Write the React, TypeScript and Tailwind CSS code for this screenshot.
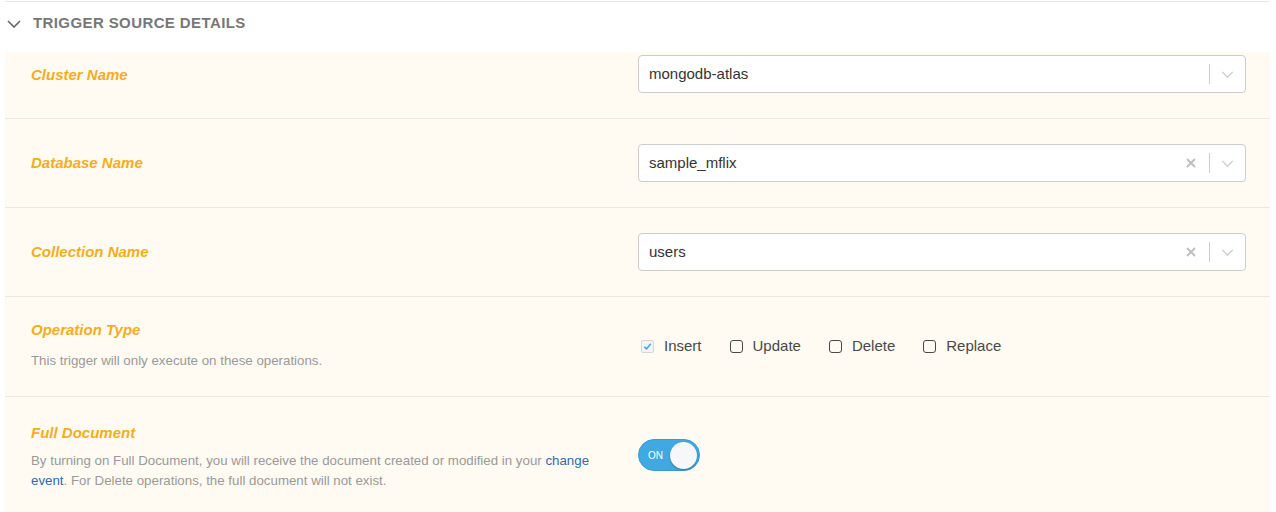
import React from 'react';

const font = { fontFamily: '"Liberation Sans", Arial, sans-serif' };

function Chevron({ className }: { className?: string }) {
  return (
    <svg viewBox="0 0 14 8" className={className} fill="none" stroke="currentColor" strokeWidth="1.6">
      <path d="M1 1l6 6 6-6" />
    </svg>
  );
}

function Select({ value, clearable }: { value: string; clearable?: boolean }) {
  return (
    <div className="flex h-[38px] w-[608px] items-center rounded-[4px] border border-[#cccccc] bg-white pl-[10px]">
      <span className="flex-1 text-[15px] text-[#333333]">{value}</span>
      {clearable && (
        <svg viewBox="0 0 10 10" className="mr-[13px] h-[10px] w-[10px] text-[#bdbdbd]" stroke="currentColor" strokeWidth="1.8">
          <path d="M1 1l8 8M9 1l-8 8" />
        </svg>
      )}
      <div className="h-[20px] w-px bg-[#cccccc]" />
      <Chevron className="mx-[11px] h-[7px] w-[13px] text-[#cccccc]" />
    </div>
  );
}

function Label({ children }: { children: React.ReactNode }) {
  return <div className="text-[15px] font-bold italic text-[#f5ad1b]">{children}</div>;
}

function Check({ label, checked }: { label: string; checked?: boolean }) {
  return (
    <label className="flex items-center gap-[10px] text-[15px] text-[#4a4848]">
      {checked ? (
        <span className="flex h-[13px] w-[13px] items-center justify-center rounded-[2px] border border-[#d6d6d6] bg-[#f4f4f4]">
          <svg viewBox="0 0 10 10" className="h-[9px] w-[9px]" fill="none" stroke="#3aa1dd" strokeWidth="1.6">
            <path d="M1.5 5.2l2.4 2.4L8.6 2" />
          </svg>
        </span>
      ) : (
        <span className="h-[13px] w-[13px] rounded-[3px] border-[1.5px] border-[#4a4848]" />
      )}
      {label}
    </label>
  );
}

function Row({ left, right, className }: { left: React.ReactNode; right: React.ReactNode; className: string }) {
  return (
    <div className={`grid grid-cols-[633px_608px] border-b border-[#ece8e1] ${className}`}>
      <div className="pl-[26px]">{left}</div>
      <div>{right}</div>
    </div>
  );
}

export default function App() {
  return (
    <div className="h-[512px] bg-white pl-[5px] pr-[6px] pt-[1px]" style={font}>
      <div className="border-t border-[#e8e8e8]">
        <div className="flex h-[50px] items-center gap-[12px] pb-[7px] pl-[2px]">
          <Chevron className="h-[8px] w-[14px] text-[#666666]" />
          <span className="text-[15px] font-bold tracking-[0.4px] text-[#777777]">TRIGGER SOURCE DETAILS</span>
        </div>
        <div className="bg-[#fffbf3]">
          <Row
            className="h-[67px] items-start pt-[3px]"
            left={<div className="pt-[9px]"><Label>Cluster Name</Label></div>}
            right={<Select value="mongodb-atlas" />}
          />
          <Row
            className="h-[89px] items-center"
            left={<Label>Database Name</Label>}
            right={<Select value="sample_mflix" clearable />}
          />
          <Row
            className="h-[89px] items-center"
            left={<Label>Collection Name</Label>}
            right={<Select value="users" clearable />}
          />
          <Row
            className="h-[100px] items-center"
            left={
              <div className="-mt-[3px]">
                <Label>Operation Type</Label>
                <div className="mt-[10px] text-[13.3px] text-[#999999]">This trigger will only execute on these operations.</div>
              </div>
            }
            right={
              <div className="flex items-center gap-[28px] pl-[3px]">
                <Check label="Insert" checked />
                <Check label="Update" />
                <Check label="Delete" />
                <Check label="Replace" />
              </div>
            }
          />
          <div className="grid h-[116px] grid-cols-[633px_608px] items-start">
            <div className="pl-[26px] pr-[30px] pt-[25px]">
              <Label>Full Document</Label>
              <div className="mt-[6px] text-[13.3px] leading-[20px] text-[#999999]">
                By turning on Full Document, you will receive the document created or modified in your{' '}
                <a className="text-[#2a6bb0]">change event</a>. For Delete operations, the full document will not exist.
              </div>
            </div>
            <div className="pt-[42px]">
              <div className="flex h-[32px] w-[62px] items-center justify-between rounded-full border border-[#3a9bd5] bg-[#40a9e2] pl-[9px] pr-[2px]">
                <span className="text-[10px] font-medium text-white">ON</span>
                <span className="h-[27px] w-[27px] rounded-full bg-[#f7f7f9] shadow-[0_1px_2px_rgba(0,0,0,0.3)]" />
              </div>
            </div>
          </div>
        </div>
      </div>
    </div>
  );
}
